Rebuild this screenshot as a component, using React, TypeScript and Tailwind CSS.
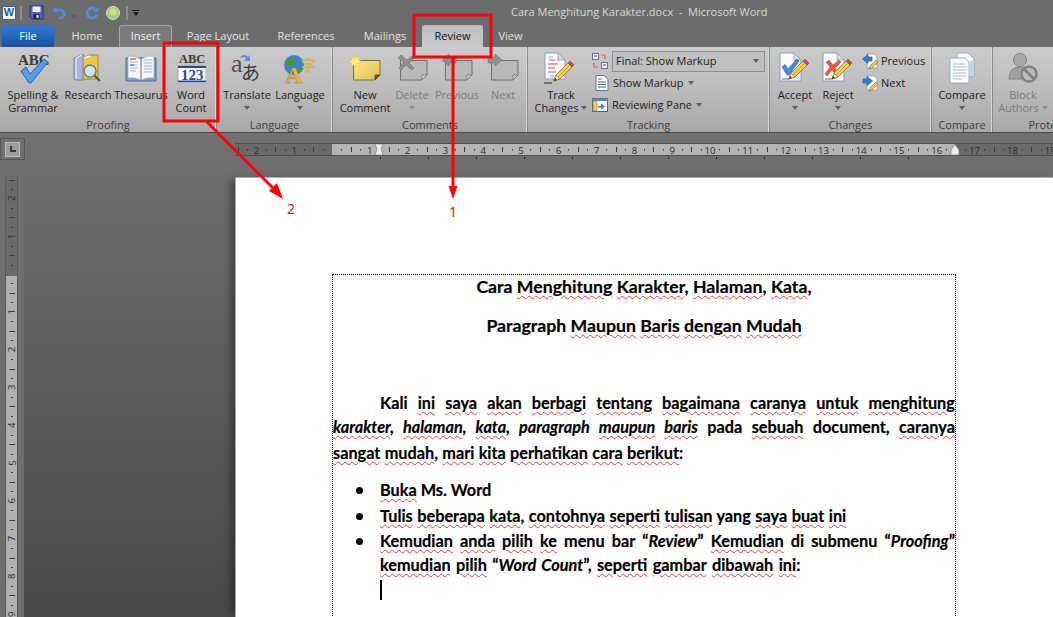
import type { ReactNode } from "react";

const uiFont = "font-['Open_Sans','Noto_Sans',sans-serif]";

function Caret({ light }: { light?: boolean }) {
  return (
    <span
      className={`inline-block w-0 h-0 border-x-[3.5px] border-t-[4px] border-x-transparent ${
        light ? "border-t-[#8a8a8a]" : "border-t-[#5f5f5f]"
      }`}
    />
  );
}

function Pencil({ x = 0, y = 0 }: { x?: number; y?: number }) {
  return (
    <g transform={`translate(${x} ${y})`}>
      <path d="M1 19 L3 13 L15 1 L19 5 L7 17 Z" fill="#f3cf5c" stroke="#8a6d22" strokeWidth="0.8" />
      <path d="M5 15 L16.5 3.5" stroke="#c79a2c" strokeWidth="1" />
      <path d="M1 19 L3 13 L7 17 Z" fill="#f6e3bd" stroke="#8a6d22" strokeWidth="0.6" />
      <path d="M1 19 L2 16 L4 18 Z" fill="#333" />
      <path d="M15 1 L17 -1 L21 3 L19 5 Z" fill="#c8524a" stroke="#7d3a35" strokeWidth="0.5" />
    </g>
  );
}

function Doc({ children, x = 2, w = 22, h = 29 }: { children?: ReactNode; x?: number; w?: number; h?: number }) {
  return (
    <g>
      <path
        d={`M${x} 1 H${x + w - 7} L${x + w} 8 V${h} H${x} Z`}
        fill="#f8fbff"
        stroke="#8c9cb4"
        strokeWidth="1"
      />
      <path d={`M${x + w - 7} 1 V8 H${x + w} Z`} fill="#d4deec" stroke="#8c9cb4" strokeWidth="0.7" />
      {children}
    </g>
  );
}

function Note({ gray, children }: { gray?: boolean; children?: ReactNode }) {
  return (
    <svg width="32" height="32" viewBox="0 0 32 32">
      <defs>
        <linearGradient id="noteYellow" x1="0" y1="0" x2="1" y2="1">
          <stop offset="0" stopColor="#fbe88e" />
          <stop offset="1" stopColor="#e2bf4e" />
        </linearGradient>
      </defs>
      <path
        d="M4.5 8.5 H31 V23 L26 28 H4.5 Z"
        fill={gray ? "#b9b9b9" : "url(#noteYellow)"}
        stroke={gray ? "#6f6f6f" : "#7a6c34"}
        strokeWidth="1"
      />
      <path d="M26 28 V23 H31 Z" fill={gray ? "#d8d8d8" : "#6d5f2c"} stroke={gray ? "#6f6f6f" : "#4d4420"} strokeWidth="0.8" />
      {children}
    </svg>
  );
}

const icons: Record<string, ReactNode> = {
  spelling: (
    <svg width="34" height="32" viewBox="0 0 34 32">
      <text x="2" y="13" fontFamily="'Liberation Serif',serif" fontWeight="700" fontSize="15" fill="#3b3b3b">
        ABC
      </text>
      <path d="M5 19 L10 15 L14 22 L28 7 L32 10 L15 31 L13 31 Z" fill="#5a9ae6" stroke="#2a5fb0" strokeWidth="1" />
    </svg>
  ),
  research: (
    <svg width="30" height="32" viewBox="0 0 30 32">
      <path d="M1 6 L8 3 H11 V28 H3 L1 27 Z" fill="#aab4e8" stroke="#6870a8" strokeWidth="0.8" />
      <path d="M3 6 L9 3 M3 6 V27" stroke="#f4f4ff" strokeWidth="1" />
      <path d="M10 6 L16 3 H25 V27 H10 Z" fill="#ecc64f" stroke="#96782a" strokeWidth="0.8" />
      <path d="M11 6 L17 4" stroke="#fff6cf" strokeWidth="1.4" />
      <circle cx="17" cy="19" r="6" fill="#cde4ee" stroke="#6a7d80" strokeWidth="1.4" />
      <path d="M21.5 23.5 L27 29" stroke="#555" strokeWidth="2.2" />
    </svg>
  ),
  thesaurus: (
    <svg width="32" height="32" viewBox="0 0 32 32">
      <path d="M1 6 H31 V29 H1 Z" fill="#7f9fd0" stroke="#4d6a9a" strokeWidth="1" />
      <path d="M3 4 Q10 3 15.5 7 V28 Q10 25 3 26 Z" fill="#f4f6fa" stroke="#9aa6ba" strokeWidth="0.7" />
      <path d="M29 4 Q22 3 16.5 7 V28 Q22 25 29 26 Z" fill="#f4f6fa" stroke="#9aa6ba" strokeWidth="0.7" />
      <path d="M5 7 H11" stroke="#d8403a" strokeWidth="1.2" />
      <path d="M5 10 H13 M5 13 H12 M5 16 H13 M5 19 H11 M19 8 H27 M19 11 H27 M19 14 H27 M19 17 H27 M19 20 H27" stroke="#a6b4cc" strokeWidth="1" />
      <path d="M5 13 H9" stroke="#4a7cc8" strokeWidth="1.2" />
    </svg>
  ),
  wordcount: (
    <svg width="30" height="32" viewBox="0 0 30 32">
      <text x="3" y="11" fontFamily="'Liberation Serif',serif" fontWeight="700" fontSize="12.5" fill="#3b3b3b">
        ABC
      </text>
      <rect x="2" y="14" width="28" height="16" fill="#f8fafd" stroke="#8d9bb5" strokeWidth="0.8" />
      <rect x="2" y="14" width="28" height="2" fill="#2b4d8c" />
      <rect x="2" y="28.5" width="28" height="1.5" fill="#2b4d8c" />
      <text x="5" y="27.5" fontFamily="'Liberation Serif',serif" fontWeight="700" fontSize="15" fill="#2b4d8c">
        123
      </text>
    </svg>
  ),
  translate: (
    <svg width="34" height="32" viewBox="0 0 34 32" overflow="visible">
      <text x="1" y="20" fontFamily="'Liberation Serif',serif" fontSize="26" fill="#505050">
        a
      </text>
      <text x="11" y="28" fontFamily="'Noto Sans CJK JP',sans-serif" fontSize="19" fill="#3c3c3c">
        あ
      </text>
      <path d="M10 5 Q15 1 18 5 L20 3 V9 H14 L16 6.5 Q14 4 11 6 Z" fill="#5f8fd2" />
    </svg>
  ),
  language: (
    <svg width="34" height="32" viewBox="0 0 34 32" overflow="visible">
      <circle cx="11" cy="13" r="10" fill="#3f7fd8" />
      <path d="M4 8 Q9 4 12 7 Q15 11 10 13 Q6 16 3 13 Z M14 16 Q19 14 20 17 Q17 23 13 22 Z" fill="#3f9a3c" />
      <text x="18" y="19" fontFamily="'Noto Sans CJK SC',sans-serif" fontWeight="700" fontSize="15" fill="#d4b060">
        字
      </text>
      <text x="2" y="31" fontFamily="'Liberation Serif',serif" fontWeight="700" fontSize="24" fill="#e8b94a" stroke="#a67c1f" strokeWidth="0.5">
        A
      </text>
    </svg>
  ),
  comment: (
    <Note>
      <path d="M6 3 L7.5 6.5 L11 4.5 L9.5 8 L13 9.5 L9.5 11 L11 14.5 L7.5 12.5 L6 16 L5 12.5 L2 14.5 L3 11 L0 9.5 L3 8 L2 4.5 L5 6.5 Z" fill="#fff27a" stroke="#efc23c" strokeWidth="0.6" />
    </Note>
  ),
  del: (
    <Note gray>
      <path d="M2 6 L5 3 L11 8 L16 4 L18 6 L13 11 L18 16 L16 18 L10 13 L5 18 L3 16 L8 10 Z" fill="#8f8f8f" stroke="#707070" strokeWidth="0.6" />
    </Note>
  ),
  prev: (
    <Note gray>
      <path d="M1 8 L8 2 V5 H15 V11 H8 V14 Z" fill="#8f8f8f" stroke="#707070" strokeWidth="0.6" />
    </Note>
  ),
  next: (
    <Note gray>
      <path d="M15 8 L8 2 V5 H1 V11 H8 V14 Z" fill="#8f8f8f" stroke="#707070" strokeWidth="0.6" />
    </Note>
  ),
  track: (
    <svg width="34" height="32" viewBox="0 0 34 32">
      <Doc x={1} w={20} h={27}>
        <path d="M5 8 H11 M4 12 H14 M4 16 H11 M4 20 H12" stroke="#d8503c" strokeWidth="1" />
        <path d="M5 5 H9 M13 8 H15 M6 24 H10" stroke="#9aa4b4" strokeWidth="1" />
      </Doc>
      <path d="M0 31 H8" stroke="#222" strokeWidth="1" />
      <Pencil x={9} y={10} />
    </svg>
  ),
  accept: (
    <svg width="32" height="32" viewBox="0 0 32 32">
      <Doc x={1} w={21} h={29}>
        <path d="M3 15 L6 12.5 L9 17 L18 7 L20 9 L10 23 L8 23 Z" fill="#4c8be0" stroke="#2a5fb0" strokeWidth="0.7" />
        <path d="M3 27 H10" stroke="#d8403a" strokeWidth="1" />
      </Doc>
      <Pencil x={9} y={8} />
    </svg>
  ),
  reject: (
    <svg width="32" height="32" viewBox="0 0 32 32">
      <Doc x={1} w={21} h={29}>
        <path d="M4 10 L7 8 L11 13 L17 8 L19 10 L13 16 L18 22 L15 24 L10 18 L5 24 L3 22 L8 15 Z" fill="#ea5a48" stroke="#c03a2c" strokeWidth="0.5" />
        <path d="M3 27 H10" stroke="#d8403a" strokeWidth="1" />
      </Doc>
      <Pencil x={9} y={8} />
    </svg>
  ),
  compare: (
    <svg width="26" height="32" viewBox="0 0 26 32">
      <path d="M8 1 H19 L25 7 V24 H8 Z" fill="#f6f8fb" stroke="#97a6bd" strokeWidth="0.9" />
      <path d="M1 6 H16 L20 10 V31 H1 Z" fill="#fbfcfe" stroke="#8ea4c4" strokeWidth="0.9" />
      <path d="M4 12 H16 M4 15 H17 M4 18 H17 M4 21 H17 M4 24 H17 M4 27 H13" stroke="#a8b8d0" strokeWidth="1" />
      <path d="M20 9 H25 V24 H20 Z" fill="#c4d4ea" />
    </svg>
  ),
  block: (
    <svg width="32" height="32" viewBox="0 0 32 32">
      <circle cx="13" cy="8" r="6.5" fill="#a8a8a8" stroke="#858585" />
      <path d="M2 27 Q2 15 13 15 Q22 15 23 22 L18 27 Z" fill="#a0a0a0" stroke="#808080" />
      <circle cx="22" cy="22" r="7.5" fill="#bcbcbc" stroke="#808080" strokeWidth="2.4" />
      <path d="M17 17 L27 27" stroke="#808080" strokeWidth="2.6" />
    </svg>
  ),
  balloons: (
    <svg width="16" height="16" viewBox="0 0 16 16">
      <rect x="0.5" y="0.5" width="6" height="6" fill="#e8edf6" stroke="#66718a" />
      <rect x="9.5" y="9.5" width="6" height="6" fill="#e8edf6" stroke="#66718a" />
      <path d="M2 3 H5 M11 12 H14" stroke="#44506a" />
      <path d="M9 2 H13 V6 M6 14 H2 V10" fill="none" stroke="#e0632c" strokeWidth="1.2" />
    </svg>
  ),
  markup: (
    <svg width="14" height="16" viewBox="0 0 14 16">
      <path d="M1 0.5 H9 L13 4.5 V15.5 H1 Z" fill="#f8fbff" stroke="#5a7aa8" />
      <path d="M3 4 H7" stroke="#d8403a" />
      <path d="M3 7 H11 M3 9.5 H11 M3 12 H11" stroke="#41608f" />
    </svg>
  ),
  pane: (
    <svg width="16" height="16" viewBox="0 0 16 16">
      <rect x="0.5" y="1.5" width="15" height="13" fill="#f6f9fe" stroke="#49689a" />
      <rect x="0.5" y="1.5" width="15" height="2.5" fill="#5d86c4" />
      <rect x="1" y="4" width="4" height="10" fill="#ecc964" stroke="#98802c" strokeWidth="0.5" />
      <path d="M6 9 H9 V6.5 L13 9.5 L9 12.5 V10.5 H6 Z" fill="#3d7fd6" />
    </svg>
  ),
  prevSmall: (
    <svg width="17" height="17" viewBox="0 0 17 17">
      <path d="M5 1 H12 L15 4 V15 H5 Z" fill="#f8fbff" stroke="#8c9cb4" strokeWidth="0.8" />
      <path d="M0.5 6 L6 1.5 V4 H10 V8 H6 V10.5 Z" fill="#3c79d2" stroke="#214f9c" strokeWidth="0.6" />
      <path d="M7 16 L8 13 L14 7 L16 9 L10 15 Z" fill="#f0c850" stroke="#7d6420" strokeWidth="0.6" />
    </svg>
  ),
  nextSmall: (
    <svg width="17" height="17" viewBox="0 0 17 17">
      <path d="M5 1 H12 L15 4 V15 H5 Z" fill="#f8fbff" stroke="#8c9cb4" strokeWidth="0.8" />
      <path d="M10.5 6 L5 1.5 V4 H1 V8 H5 V10.5 Z" fill="#3c79d2" stroke="#214f9c" strokeWidth="0.6" />
      <path d="M7 16 L8 13 L14 7 L16 9 L10 15 Z" fill="#f0c850" stroke="#7d6420" strokeWidth="0.6" />
    </svg>
  ),
};

function BigButton({
  icon,
  lines,
  w,
  caret,
  disabled,
}: {
  icon: string;
  lines: string[];
  w: number;
  caret?: "below" | "inline";
  disabled?: boolean;
}) {
  return (
    <div
      style={{ width: w }}
      className={`flex flex-col items-center shrink-0 pt-[5px] text-[11px] leading-[13px] whitespace-nowrap ${
        disabled ? "text-[#7b7b7b]" : "text-[#1c1c1c]"
      }`}
    >
      <div className="h-[32px] flex items-center justify-center">{icons[icon]}</div>
      <div className="mt-[4px] flex flex-col items-center">
        {lines.map((l, i) => (
          <div key={l} className="flex items-center gap-[3px]">
            {l}
            {caret === "inline" && i === lines.length - 1 && <Caret light={disabled} />}
          </div>
        ))}
        {caret === "below" && (
          <div className="h-[13px] flex items-center">
            <Caret light={disabled} />
          </div>
        )}
      </div>
    </div>
  );
}

function Group({ label, width, pl = 0, last, children }: { label: string; width: number; pl?: number; last?: boolean; children: ReactNode }) {
  return (
    <div
      style={{ width }}
      className={`h-full flex flex-col shrink-0 ${last ? "" : "border-r border-[#8a8a8a] shadow-[inset_-1px_0_0_#d8d8d8]"}`}
    >
      <div style={{ paddingLeft: pl }} className="h-[71px] flex">
        {children}
      </div>
      <div className="h-[14px] leading-[14px] text-center text-[11px] text-[#3d3d3d] whitespace-nowrap">{label}</div>
    </div>
  );
}

function SmallRow({ icon, label, caret, gap = 4 }: { icon: string; label: string; caret?: boolean; gap?: number }) {
  return (
    <div className="h-[22px] flex items-center text-[11px] text-[#1c1c1c] whitespace-nowrap" style={{ gap }}>
      {icons[icon]}
      <span>{label}</span>
      {caret && <Caret />}
    </div>
  );
}

function QuickAccess() {
  return (
    <div className="flex items-center w-[511px] pl-[2px] shrink-0">
      <div className="w-[14px] h-[14px] bg-[#f5f8fd] border border-[#2f64b4] flex items-center justify-center text-[11px] font-bold text-[#1c58ad] font-['Liberation_Sans',sans-serif]">
        W
      </div>
      <div className="ml-[4px] w-[2px] h-[14px] border-x border-[#8f8f8f]" />
      <svg className="ml-[7px]" width="15" height="15" viewBox="0 0 15 15">
        <path d="M1 1 H14 V14 H3 L1 12 Z" fill="#5b62c4" stroke="#2b2f70" />
        <rect x="3.5" y="1.5" width="8" height="5.5" fill="#eef0fa" />
        <rect x="4.5" y="9" width="6" height="5" fill="#23264f" />
        <rect x="7.5" y="10" width="2" height="3" fill="#dfe2f4" />
      </svg>
      <svg className="ml-[8px]" width="14" height="14" viewBox="0 0 14 14">
        <path d="M4 4 H8 A4 4 0 0 1 8 12 H7" fill="none" stroke="#4f8ee0" strokeWidth="2.6" />
        <path d="M0.5 4 L5 0.5 V7.5 Z" fill="#4f8ee0" />
      </svg>
      <span className="ml-[5px]">
        <Caret />
      </span>
      <svg className="ml-[8px]" width="14" height="14" viewBox="0 0 14 14">
        <path d="M10 3 A5 5 0 1 0 12 8" fill="none" stroke="#4f8ee0" strokeWidth="2.6" />
        <path d="M13.5 0.5 V6 H8 Z" fill="#4f8ee0" />
      </svg>
      <svg className="ml-[7px]" width="14" height="14" viewBox="0 0 14 14">
        <circle cx="7" cy="7" r="6.5" fill="#a7c97a" stroke="#d8e6c6" />
        <circle cx="7" cy="6" r="3.5" fill="#c2df9c" />
      </svg>
      <div className="ml-[6px] w-[2px] h-[14px] border-x border-[#8f8f8f]" />
      <div className="ml-[4px] flex flex-col items-center gap-[1px]">
        <div className="w-[7px] h-[1px] bg-[#1f1f1f]" />
        <span className="w-0 h-0 border-x-[3.5px] border-t-[4px] border-x-transparent border-t-[#1f1f1f]" />
      </div>
    </div>
  );
}

const tabs = [
  { label: "File", w: 54, kind: "file" },
  { label: "Home", w: 64 },
  { label: "Insert", w: 53, kind: "hover" },
  { label: "Page Layout", w: 92 },
  { label: "References", w: 84 },
  { label: "Mailings", w: 74 },
  { label: "Review", w: 61, kind: "active" },
  { label: "View", w: 55 },
];

const tabStyles: Record<string, string> = {
  file: "bg-gradient-to-b from-[#2f7ad8] to-[#1b4f9f] text-white rounded-t-[3px] border border-b-0 border-[#3a6fb8]",
  hover: "bg-[#7a7a7a] text-[#f0f0f0] rounded-t-[3px] border border-b-0 border-[#a9a9a9]",
  active: "bg-gradient-to-b from-[#bdbdbd] to-[#c9c9c9] text-[#111] rounded-t-[3px]",
};

function HRuler() {
  const inch = 37.8;
  const nums = [-2, -1, 1, 2, 3, 4, 5, 6, 7, 8, 9, 10, 11, 12, 13, 14, 15, 16, 17, 18, 19];
  const ticks: number[] = [];
  for (let q = -10; q < 80; q++) if (q % 4 !== 0) ticks.push(q);
  const stops = Array.from({ length: 12 }, (_, i) => 97 + 48 * (i + 1));
  return (
    <div className="relative h-[13px] ml-[235px] flex border-y border-[#4f4f4f] mt-[10px]">
      <div className="w-[97px] bg-[#6a6a6a]" />
      <div className="w-[623px] bg-[#b4b4b4]" />
      <div className="flex-1 bg-[#6a6a6a]" />
      <svg className="absolute left-0 top-0" width="818" height="17" viewBox="0 0 818 17">
        {ticks.map((q) => {
          const x = Math.round(97 + (q * inch) / 4) + 0.5;
          return q % 2 === 0 ? (
            <path key={q} d={`M${x} 3 V8`} stroke="#3a3a3a" />
          ) : (
            <path key={q} d={`M${x} 5 V6.5`} stroke="#3a3a3a" />
          );
        })}
        {nums.map((n) => (
          <text key={n} x={97 + n * inch} y="9.5" textAnchor="middle" fontSize="9.5" fill="#2b2b2b" fontFamily="'Open Sans',sans-serif">
            {Math.abs(n)}
          </text>
        ))}
        {stops.map((x) => (
          <path key={x} d={`M${x + 0.5} 13 V15`} stroke="#222" />
        ))}
        <path d="M140 0 L148 0 L146 5 L148 11 L140 11 L142 5 Z" fill="#eeeeee" stroke="#777" strokeWidth="0.6" />
        <path d="M716 6 L720 0.5 L724 6 V11 H716 Z" fill="#eeeeee" stroke="#777" strokeWidth="0.6" />
      </svg>
    </div>
  );
}

function VRuler() {
  const inch = 37.8;
  const zero = 97;
  const nums = [-2, -1, 1, 2, 3, 4, 5, 6, 7, 8, 9, 10];
  const ticks: number[] = [];
  for (let q = -10; q < 50; q++) if (q % 4 !== 0) ticks.push(q);
  return (
    <div className="relative w-[13px] ml-[5px] h-full border-x border-[#5a5a5a] flex flex-col">
      <div className="h-[99px] bg-[#6a6a6a]" />
      <div className="flex-1 bg-[#b0b0b0]" />
      <svg className="absolute left-0 top-0" width="13" height="452" viewBox="0 0 13 452">
        {ticks.map((q) => {
          const y = Math.round(zero + (q * inch) / 4) + 0.5;
          return q % 2 === 0 ? (
            <path key={q} d={`M3.5 ${y} H9`} stroke="#3a3a3a" />
          ) : (
            <path key={q} d={`M5 ${y} H7`} stroke="#3a3a3a" />
          );
        })}
        {nums.map((n) => {
          const y = zero + n * inch;
          return (
            <text
              key={n}
              x="6"
              y={y}
              textAnchor="middle"
              dominantBaseline="central"
              fontSize="9.5"
              fill="#2b2b2b"
              fontFamily="'Open Sans',sans-serif"
              transform={`rotate(-90 6 ${y})`}
            >
              {Math.abs(n)}
            </text>
          );
        })}
      </svg>
    </div>
  );
}

function S({ children }: { children: ReactNode }) {
  return (
    <span className="underline decoration-wavy decoration-[#e83a3a] decoration-[1px] underline-offset-[2px]">
      {children}
    </span>
  );
}

const lineCls = "h-[24px] leading-[24px] whitespace-nowrap";
const justCls = "h-[24px] leading-[24px] text-justify [text-align-last:justify]";

function Bullet({ className, children }: { className?: string; children: ReactNode }) {
  return (
    <div className={`relative pl-[47px] ${className ?? ""}`}>
      <span className="absolute left-[23px] top-[9px] w-[7px] h-[7px] rounded-full bg-black" />
      {children}
    </div>
  );
}

function Document() {
  return (
    <div className="ml-[211px] w-[842px] h-full bg-white border-l border-t border-[#a6aab4] pl-[96px] pt-[96px] shadow-[-7px_0_8px_-3px_rgba(0,0,0,0.4)]">
      <div className="w-[624px] h-[400px] border-x border-t border-dotted border-black font-['Lato',sans-serif] font-bold text-[16.3px] text-black [-webkit-text-stroke:0.2px_#000]">
        <div className={`${lineCls} text-center text-[17.7px]`}>
          Cara <S>Menghitung</S> <S>Karakter</S>, <S>Halaman</S>, <S>Kata</S>,
        </div>
        <div className={`${lineCls} text-center text-[17.7px] mt-[15px]`}>
          Paragraph <S>Maupun</S> <S>Baris</S> <S>dengan</S> <S>Mudah</S>
        </div>
        <div className={`${justCls} mt-[53px] pl-[47px]`}>
          Kali <S>ini</S> <S>saya</S> <S>akan</S> <S>berbagi</S> <S>tentang</S> <S>bagaimana</S> <S>caranya</S>{" "}
          <S>untuk</S> <S>menghitung</S>
        </div>
        <div className={justCls}>
          <em>
            <S>karakter</S>, <S>halaman</S>, <S>kata</S>, paragraph <S>maupun</S> <S>baris</S>
          </em>{" "}
          pada <S>sebuah</S> document, <S>caranya</S>
        </div>
        <div className={`${lineCls} mt-[2px] [word-spacing:0.3px]`}>
          <S>sangat</S> <S>mudah</S>, <S>mari</S> <S>kita</S> <S>perhatikan</S> <S>cara</S> <S>berikut</S>:
        </div>
        <Bullet className={`${lineCls} mt-[13px]`}>
          <S>Buka</S> Ms. Word
        </Bullet>
        <Bullet className={`${lineCls} mt-[2px] [word-spacing:0.5px]`}>
          <S>Tulis</S> <S>beberapa</S> <S>kata</S>, <S>contohnya</S> <S>seperti</S> <S>tulisan</S> yang <S>saya</S>{" "}
          <S>buat</S> <S>ini</S>
        </Bullet>
        <Bullet className={`${justCls} mt-[1px]`}>
          <S>Kemudian</S> <S>anda</S> <S>pilih</S> <S>ke</S> menu bar “<em>Review</em>” <S>Kemudian</S> di submenu “
          <em>Proofing</em>”
        </Bullet>
        <div className={`${lineCls} pl-[47px] [word-spacing:1.5px]`}>
          <S>kemudian</S> <S>pilih</S> “<em>Word Count</em>”, <S>seperti</S> <S>gambar</S> <S>dibawah</S> <S>ini</S>:
        </div>
        <div className="ml-[47px] mt-[3px] w-[2px] h-[20px] bg-black" />
      </div>
    </div>
  );
}

export default function App() {
  return (
    <div className={`relative w-[1053px] h-[617px] overflow-hidden flex flex-col bg-[#6d6d6d] ${uiFont}`}>
      <div className="h-[25px] flex items-center shrink-0 bg-[#6c6c6c]">
        <QuickAccess />
        <span className="text-[11px] text-[#d9d9d9] whitespace-pre">Cara Menghitung Karakter.docx  -  Microsoft Word</span>
      </div>

      <div className="h-[22px] flex shrink-0 pl-[1px] bg-[#6c6c6c]">
        {tabs.map((t) => (
          <div
            key={t.label}
            style={{ width: t.w }}
            className={`shrink-0 flex items-center justify-center text-[11px] ${
              t.kind ? tabStyles[t.kind] : "text-[#e2e2e2]"
            }`}
          >
            {t.label}
          </div>
        ))}
      </div>

      <div className="h-[86px] shrink-0 flex bg-gradient-to-b from-[#cbcbcb] via-[#bcbcbc] to-[#a8a8a8] border-b border-[#4a4a4a] overflow-hidden">
        <Group label="Proofing" width={217} pl={3}>
          <BigButton icon="spelling" lines={["Spelling &", "Grammar"]} w={60} />
          <BigButton icon="research" lines={["Research"]} w={50} />
          <BigButton icon="thesaurus" lines={["Thesaurus"]} w={56} />
          <BigButton icon="wordcount" lines={["Word", "Count"]} w={44} />
        </Group>
        <Group label="Language" width={116} pl={2}>
          <BigButton icon="translate" lines={["Translate"]} w={56} caret="below" />
          <BigButton icon="language" lines={["Language"]} w={50} caret="below" />
        </Group>
        <Group label="Comments" width={195} pl={7}>
          <BigButton icon="comment" lines={["New", "Comment"]} w={50} />
          <BigButton icon="del" lines={["Delete"]} w={44} caret="below" disabled />
          <BigButton icon="prev" lines={["Previous"]} w={46} disabled />
          <BigButton icon="next" lines={["Next"]} w={46} disabled />
        </Group>
        <Group label="Tracking" width={242} pl={6}>
          <BigButton icon="track" lines={["Track", "Changes"]} w={54} caret="inline" />
          <div className="ml-[4px] pt-[3px] flex flex-col">
            <div className="h-[22px] flex items-center gap-[4px]">
              {icons.balloons}
              <div className="w-[153px] h-[21px] border border-[#8e8e8e] bg-[#c0c0c0] pl-[3px] pr-[5px] flex items-center justify-between text-[11px] text-[#1c1c1c]">
                Final: Show Markup
                <Caret />
              </div>
            </div>
            <div className="pl-[3px]">
              <SmallRow icon="markup" label="Show Markup" caret />
            </div>
            <SmallRow icon="pane" label="Reviewing Pane" caret />
          </div>
        </Group>
        <Group label="Changes" width={162} pl={3}>
          <BigButton icon="accept" lines={["Accept"]} w={44} caret="below" />
          <BigButton icon="reject" lines={["Reject"]} w={42} caret="below" />
          <div className="ml-[3px] pt-[3px] flex flex-col">
            <SmallRow icon="prevSmall" label="Previous" gap={2} />
            <SmallRow icon="nextSmall" label="Next" gap={2} />
          </div>
        </Group>
        <Group label="Compare" width={61}>
          <BigButton icon="compare" lines={["Compare"]} w={60} caret="below" />
        </Group>
        <Group label="Protect" width={108} last>
          <BigButton icon="block" lines={["Block", "Authors"]} w={60} caret="inline" disabled />
        </Group>
      </div>

      <div className="flex-1 min-h-0 flex flex-col bg-gradient-to-b from-[#717171] to-[#494949]">
        <div className="h-[44px] shrink-0 relative">
          <HRuler />
          <div className="absolute left-0 top-[5px] w-[25px] h-[22px] border border-[#555] flex items-center justify-center">
            <div className="w-[15px] h-[15px] bg-[#9c9c9c] border border-[#bdbdbd] flex items-center justify-center">
              <div className="w-[6px] h-[6px] border-l-2 border-b-2 border-[#3a3a3a]" />
            </div>
          </div>
        </div>
        <div className="flex-1 min-h-0 flex">
          <div className="w-[24px] shrink-0 bg-[#6f6f6f] h-full">
            <VRuler />
          </div>
          <Document />
        </div>
      </div>

      <svg className="absolute left-0 top-0 pointer-events-none" width="1053" height="617" viewBox="0 0 1053 617">
        <rect x="164" y="43" width="54" height="78" fill="none" stroke="#fb0007" strokeWidth="3" />
        <rect x="414" y="15" width="77" height="42" fill="none" stroke="#fb0007" strokeWidth="3" />
        <path d="M453 58 V190" stroke="#fb0007" strokeWidth="3" />
        <path d="M448.5 186 H457.5 L453 199 Z" fill="#fb0007" />
        <path d="M207 122 L276 191" stroke="#fb0007" strokeWidth="3" />
        <path d="M269 191 L277 183 L283 199 Z" fill="#fb0007" />
        <text x="291" y="214" textAnchor="middle" fontSize="14" fill="#fb0007" fontFamily="'Open Sans',sans-serif">
          2
        </text>
        <text x="453" y="217" textAnchor="middle" fontSize="14" fill="#fb0007" fontFamily="'Open Sans',sans-serif">
          1
        </text>
      </svg>
    </div>
  );
}
